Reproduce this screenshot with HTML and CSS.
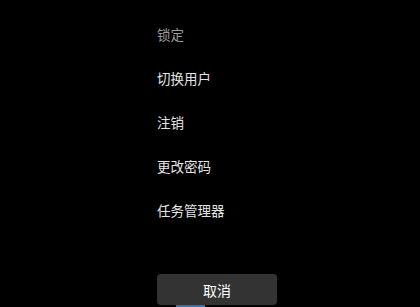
FILE: index.html
```html
<!DOCTYPE html>
<html lang="zh-CN">
<head>
<meta charset="utf-8">
<link rel="stylesheet" href="styles.css">
</head>
<body>
<div class="screen">
  <ul class="menu">
    <li class="item dim">锁定</li>
    <li class="item">切换用户</li>
    <li class="item">注销</li>
    <li class="item">更改密码</li>
    <li class="item">任务管理器</li>
  </ul>
  <div class="actions">
    <button class="cancel">取消</button>
    <div class="focus-bar"></div>
  </div>
</div>
</body>
</html>
```
FILE: styles.css
```css
html, body {
  margin: 0;
  padding: 0;
  background: #000;
  width: 420px;
  height: 307px;
  overflow: hidden;
}
.screen {
  font-family: "Noto Sans CJK SC", "Noto Sans", sans-serif;
  padding-left: 157px;
  padding-top: 12px;
}
.menu {
  list-style: none;
  margin: 0;
  padding: 0;
}
.item {
  height: 44px;
  line-height: 44px;
  font-size: 13.5px;
  color: #e4e4e4;
}
.item.dim {
  color: #9c9c9c;
}
.actions {
  margin-top: 42px;
  width: 120px;
  display: flex;
  flex-direction: column;
  align-items: flex-start;
}
.cancel {
  width: 120px;
  height: 31px;
  border: none;
  border-radius: 4px;
  background: #333333;
  color: #ffffff;
  font-family: "Noto Sans CJK SC", "Noto Sans", sans-serif;
  font-size: 14px;
  padding: 0;
}
.focus-bar {
  margin-left: 19px;
  width: 29px;
  height: 2px;
  background: #2a78b8;
}
```
